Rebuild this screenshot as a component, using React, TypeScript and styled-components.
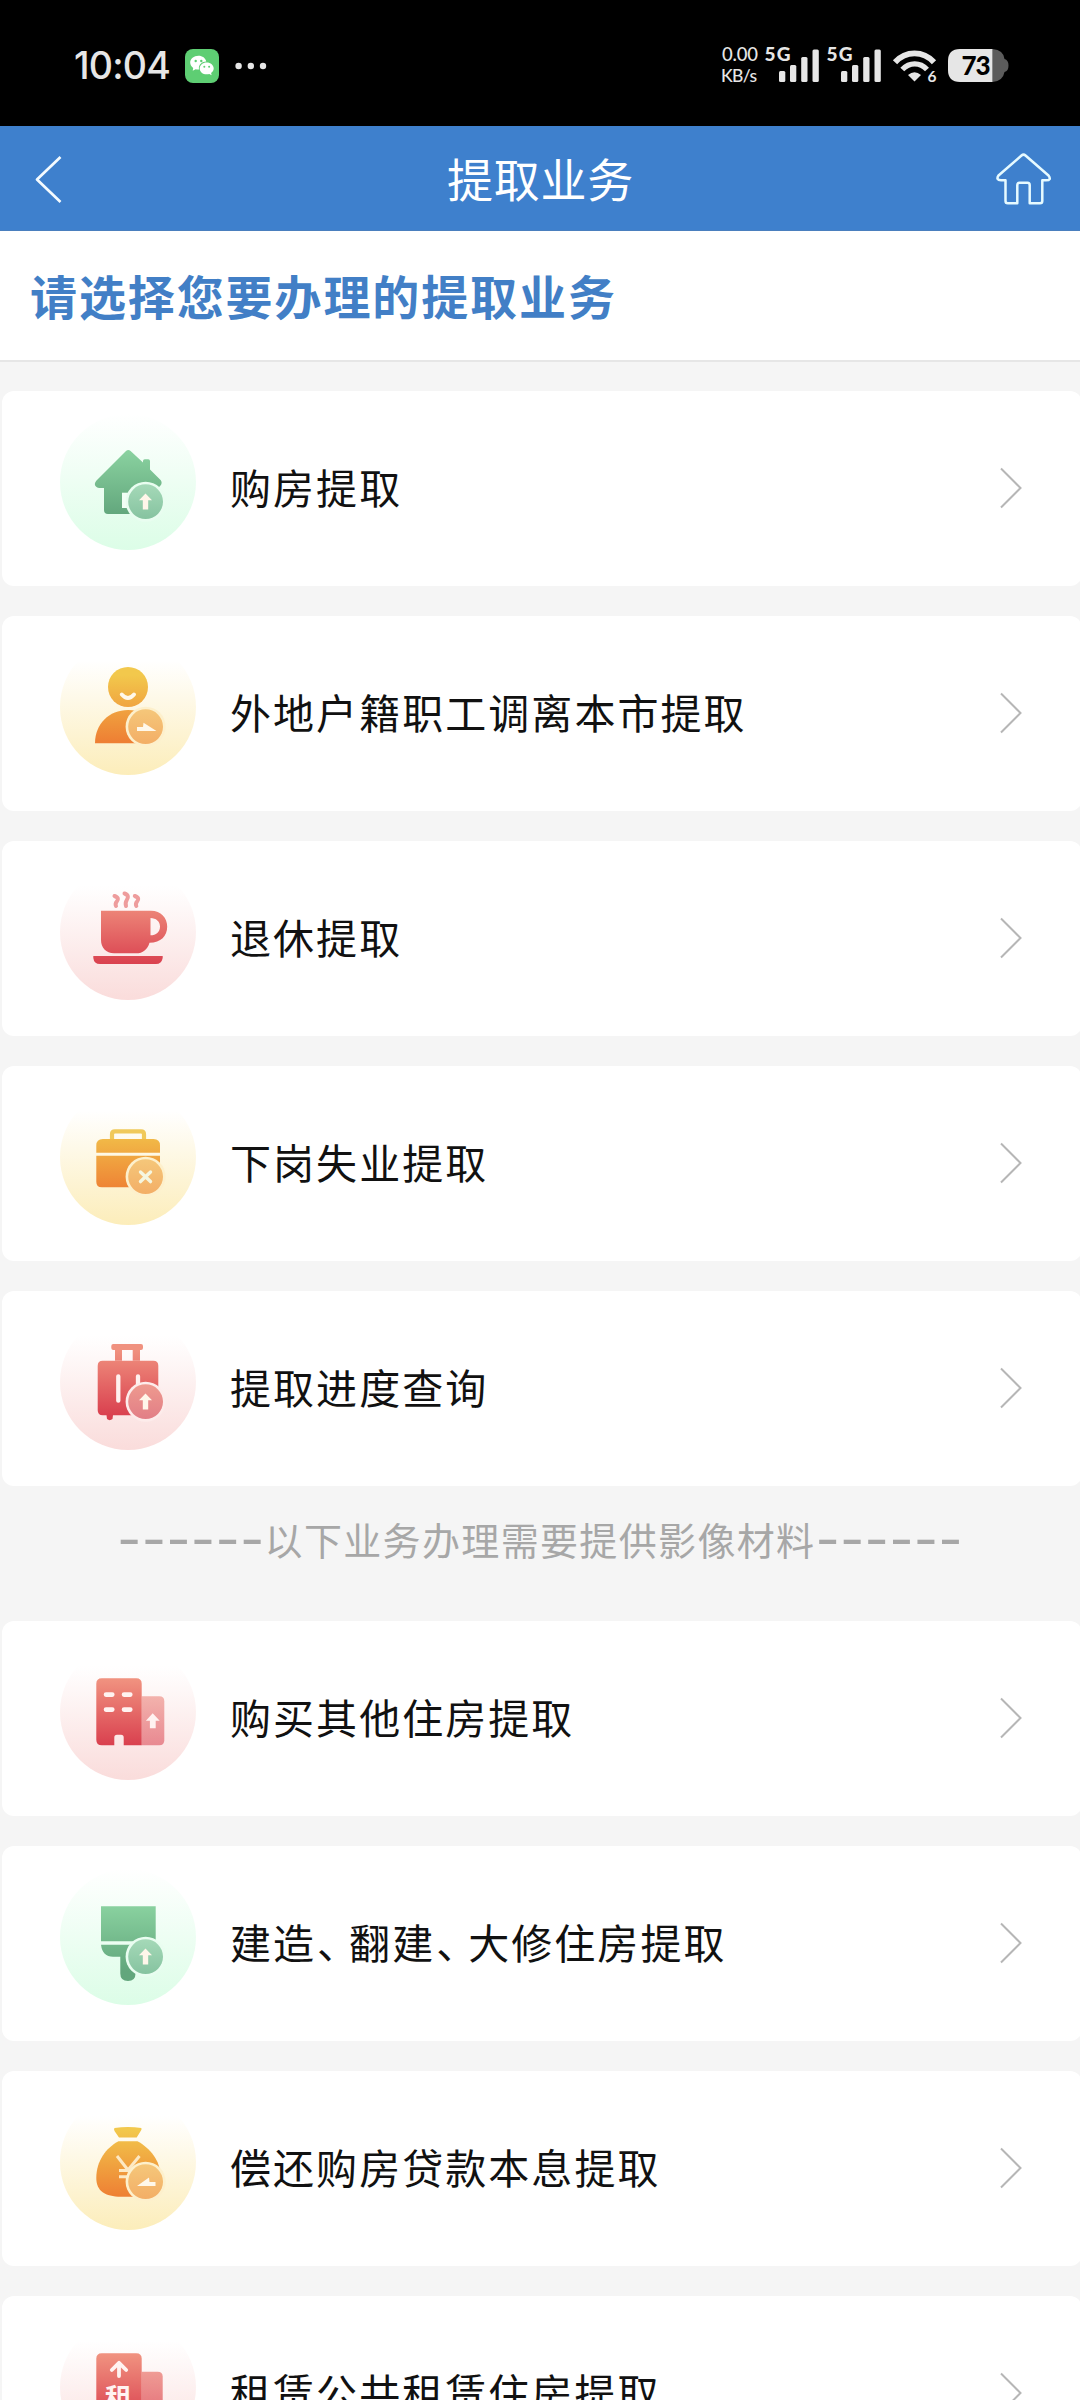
import React from "react";
import styled, { createGlobalStyle } from "styled-components";

const GlobalStyle = createGlobalStyle`
  * { box-sizing: border-box; }
  html, body { margin: 0; padding: 0; background: #f5f5f5; }
  body { font-family: "Noto Sans CJK SC", "Noto Sans", sans-serif; }
`;

const Screen = styled.div`
  width: 1080px;
  height: 2400px;
  overflow: hidden;
  background: #f5f5f5;
  display: flex;
  flex-direction: column;
`;

const StatusBar = styled.div`
  flex: none;
  height: 126px;
  background: #000;
  color: #e6e6e6;
  display: flex;
  align-items: center;
  justify-content: space-between;
  padding: 6px 70px 0 74px;
`;

const StatusGroup = styled.div`
  display: flex;
  align-items: center;
`;

const Clock = styled.span`
  font: 500 37.5px/40px "Inter", "Noto Sans", sans-serif;
  width: 111px;
  letter-spacing: -0.8px;
  white-space: nowrap;
`;

const NavBar = styled.header`
  flex: none;
  height: 105px;
  background: #3e80cd;
  border-bottom: 1px solid #4a7fbe;
  display: flex;
  align-items: center;
  justify-content: space-between;
  padding: 0 28px 0 34px;
`;

const NavSide = styled.button`
  width: 56px;
  height: 56px;
  padding: 2px 0 0;
  border: 0;
  background: none;
  display: flex;
  align-items: center;
`;

const NavTitle = styled.h1`
  margin: 0 5px 3px 0;
  color: #fff;
  font-size: 46px;
  font-weight: 400;
  line-height: 60px;
  letter-spacing: 0.8px;
`;

const Prompt = styled.h2`
  flex: none;
  margin: 0;
  height: 131px;
  padding: 0 30px;
  background: #fff;
  border-bottom: 2px solid #e6e6e6;
  color: #427fc6;
  font-size: 47px;
  font-weight: 700;
  line-height: 127px;
  letter-spacing: 1.9px;
`;

const List = styled.main`
  display: flex;
  flex-direction: column;
  gap: 30px;
  padding: 29px 0 0 2px;
`;

const Card = styled.div`
  flex: none;
  width: 1080px;
  height: 195px;
  border-radius: 12px;
  background: #fff;
  display: flex;
  align-items: center;
  padding: 0 60px 0 58px;
`;

const CardIcon = styled.svg`
  flex: none;
  width: 136px;
  height: 136px;
  margin: -13px 34px 0 0;
`;

const CardLabel = styled.span`
  flex: 1;
  padding-bottom: 5px;
  color: #111;
  font-size: 41px;
  line-height: 60px;
  letter-spacing: 2.05px;
  white-space: nowrap;
`;

const Pause = styled.span`
  margin-left: 1px;
  letter-spacing: -9px;
`;

const Note = styled.div`
  flex: none;
  height: 75px;
  padding: 0 2px 29px 0;
  color: #a7a7a7;
  font-size: 38px;
  line-height: 46px;
  letter-spacing: 1.35px;
  display: flex;
  align-items: center;
  justify-content: center;
  white-space: nowrap;
`;

const Dashes = styled.span`
  font-family: "Inter", sans-serif;
  font-size: 53px;
  letter-spacing: 0.2px;
`;

type Tone = "green" | "gold" | "red";

const tones: Record<Tone, { top: string; bottom: string; halo: string; ring: string; badgeTop: string; badgeBottom: string }> = {
  green: { top: "#8ad2a0", bottom: "#62a67c", halo: "#dcfde7", ring: "#e9fdf0", badgeTop: "#a5d9b8", badgeBottom: "#86c3a0" },
  gold: { top: "#f2c84c", bottom: "#ee8034", halo: "#fcedba", ring: "#fdf0cc", badgeTop: "#f5c77a", badgeBottom: "#f3ae66" },
  red: { top: "#f0917f", bottom: "#d93f4e", halo: "#fadcdb", ring: "#fdeceb", badgeTop: "#ee9a8f", badgeBottom: "#e27e86" },
};

const BadgeUp = () => <path d="M85.500 79.500l6.500 6.800h-3.800v9.200h-5.400v-9.200H79z" fill="#fff6ea" />;
const BadgeRight = () => <path d="M77 88h6l.5-4.200L96.500 92H77z" fill="#fff8ea" />;
const BadgeLeft = () => <path d="M95.500 88h-6l-.5-4.400L77 92h18.500z" fill="#fff8ea" />;
const BadgeCross = () => <path d="M80.500 83l10 9.600M90.500 83l-10 9.600" stroke="#f5f6e0" strokeWidth="3.400" strokeLinecap="round" />;

interface DrawingProps {
  id: string;
  tone: Tone;
  badge?: React.ReactNode;
  children: React.ReactNode;
}

const Drawing = ({ id, tone, badge, children }: DrawingProps) => {
  const t = tones[tone];
  return (
    <CardIcon viewBox="0 0 136 136" fill="none">
      <defs>
        <linearGradient id={`${id}-halo`} x1="0" y1="0" x2="0" y2="136" gradientUnits="userSpaceOnUse">
          <stop offset={tone === "green" ? 0 : 0.16} stopColor="#fff" />
          <stop offset="1" stopColor={t.halo} />
        </linearGradient>
        <linearGradient id={`${id}-ink`} x1="0" y1="36" x2="0" y2="102" gradientUnits="userSpaceOnUse">
          <stop offset="0" stopColor={t.top} />
          <stop offset="1" stopColor={t.bottom} />
        </linearGradient>
        <linearGradient id={`${id}-badge`} x1="0" y1="70" x2="0" y2="105" gradientUnits="userSpaceOnUse">
          <stop offset="0" stopColor={t.badgeTop} />
          <stop offset="1" stopColor={t.badgeBottom} />
        </linearGradient>
      </defs>
      <circle cx="68" cy="68" r="68" fill={`url(#${id}-halo)`} />
      <g fill={`url(#${id}-ink)`}>{children}</g>
      {badge && (
        <>
          <circle cx="85.600" cy="87.700" r="20" fill={t.ring} />
          <circle cx="85.600" cy="87.700" r="17.400" fill={`url(#${id}-badge)`} />
          {badge}
        </>
      )}
    </CardIcon>
  );
};

const HouseIcon = () => (
  <Drawing id="house" tone="green" badge={<BadgeUp />}>
    <path d="M66 37Q68.300 35 70.600 37L83 48.500V47Q83 45.300 84.800 45.300H88.200Q90 45.300 90 47V55.500L100.800 66.200Q102.600 69 100.500 71.500Q99.500 74 93 74V100H48Q44 100 44 96V74H39Q35 73 34.800 70Q35 68 36.500 66.500Z" />
    <path d="M62 78.700h8V94h-8z" fill="#f1fff5" />
  </Drawing>
);

const PersonIcon = () => (
  <Drawing id="person" tone="gold" badge={<BadgeRight />}>
    <circle cx="68" cy="48" r="20" />
    <path d="M61.800 55.500Q68 62.500 74 55.500" stroke="#fff8ea" strokeWidth="4" strokeLinecap="round" fill="none" />
    <path d="M35 104.300C35 85 49 71 68 71C80 71 88 76 92 84V104.300Z" />
  </Drawing>
);

const CupIcon = () => (
  <Drawing id="cup" tone="red">
    <path fillRule="evenodd" d="M41 46.700H91C101 46.700 107.200 54 107.200 62.500C107.200 72 101 78.700 89.500 78.700C87.500 85.500 83 89.300 76 89.300H54C46 89.300 41 83.500 41 76ZM90.500 54V71.300C96 71.300 100 68 100 62.500C100 57.500 96 54 90.500 54Z" />
    <path d="M33.300 92H102.700V94Q101.500 100 96 100H40Q34 100 33.300 94Z" />
    <path d="M54.500 32c4.200 1.500 4 3.500 2.300 5.500s-1.500 3-.8 4.500M64.500 29.500c4.200 1.500 4 4 2.300 6.500s-1.500 3.500-.8 6M74.800 32c4.200 1.500 4 3.500 2.300 5.500s-1.500 3-.8 4.500" stroke="#ee9c9c" strokeWidth="4" strokeLinecap="round" fill="none" />
  </Drawing>
);

const BriefcaseIcon = () => (
  <Drawing id="briefcase" tone="gold" badge={<BadgeCross />}>
    <path d="M52 51V45.300Q52 42.300 55 42.300H81Q84 42.300 84 45.300V51" stroke="#f0c95a" strokeWidth="4.200" fill="none" />
    <path d="M36.300 63.700V56.500Q36.300 50 42.800 50H93.500Q100 50 100 56.500V63.700ZM36.300 66.700H100V98.300H41.800Q36.300 98.300 36.300 92.800Z" />
  </Drawing>
);

const SuitcaseIcon = () => (
  <Drawing id="suitcase" tone="red" badge={<BadgeUp />}>
    <path fillRule="evenodd" d="M53.300 30H81Q83 30 83 32V34Q83 36 81 36H80V46.700H55V36H53.300Q51.300 36 51.300 34V32Q51.300 30 53.300 30ZM62 36V46.700H72.700V36Z" />
    <path d="M42.700 46.700H93.300Q98.300 46.700 98.300 51.700V101.300H53L52.500 105Q49.700 107.300 47 105L46.500 101.300H42.700Q37.700 101.300 37.700 96.300V51.700Q37.700 46.700 42.700 46.700Z" />
    <path d="M58.300 62.300V86.700M78 62.300V75" stroke="#fff1ef" strokeWidth="4.300" strokeLinecap="round" />
  </Drawing>
);

const BuildingIcon = () => (
  <Drawing id="building" tone="red">
    <path d="M81.700 52.300H99.300Q104.300 52.300 104.300 57.300V96.300Q104.300 101.300 99.300 101.300H81.700Z" opacity="0.560" />
    <path d="M41.800 34.300H76.200Q81.700 34.300 81.700 39.800V101.300H63.700V93.500Q63.700 90.700 61 90.700H57Q54.300 90.700 54.300 93.500V101.300H41.800Q36.300 101.300 36.300 95.800V39.800Q36.300 34.300 41.800 34.300Z" />
    <path d="M46 50.600h6.300M64 50.600h6.300M46 65.600h6.300M64 65.600h6.300" stroke="#fff3f1" strokeWidth="4.600" strokeLinecap="round" />
    <path d="M92.700 69.300l7 7.500h-4v7.500h-5.800v-7.500h-4z" fill="#fff3f1" />
  </Drawing>
);

const BrushIcon = () => (
  <Drawing id="brush" tone="green" badge={<BadgeUp />}>
    <path d="M41 37.300H95.700V72.300H41Z" />
    <path d="M41 75.700H95.700V87.700H75.500V104.500Q75.500 112 68 112Q60.300 112 60.300 104.500V87.700H53Q42.500 87.700 41 75.700Z" />
  </Drawing>
);

const MoneyBagIcon = () => (
  <Drawing id="bag" tone="gold" badge={<BadgeLeft />}>
    <path d="M54.500 34Q68 32 81.300 34Q82 35 81 36.500L76.700 43.500H59L54.500 37Q53.500 35 54.500 34Z" />
    <path d="M58.500 47.300H77.500C90 54 100.500 67 100.500 82C100.500 97 90 102.700 76 102.700H61C45 102.700 36.300 97 36.300 84C36.300 67 46 54 58.500 47.300Z" />
    <path d="M57 62L68 76L79.500 62M59 76.500H77M59 82.800H72" stroke="#fde9c4" strokeWidth="3" fill="none" />
  </Drawing>
);

const RentIcon = () => (
  <Drawing id="rent" tone="red">
    <path d="M81.700 52.700H97.700Q102.700 52.700 102.700 57.700V101.300H81.700Z" opacity="0.740" />
    <path d="M41.800 34.300H76.200Q81.700 34.300 81.700 39.800V101.300H41.800Q36.300 101.300 36.300 95.800V39.800Q36.300 34.300 41.800 34.300Z" />
    <path d="M51.800 51L59 43.800L66.200 51M59 45V57" stroke="#fff3f1" strokeWidth="3.800" strokeLinecap="round" strokeLinejoin="round" fill="none" />
    <text x="58.500" y="88.500" textAnchor="middle" fontSize="27" fontWeight="700" fill="#fff3f1">租</text>
  </Drawing>
);

const ChevronMark = styled.svg`
  flex: none;
  margin-bottom: 2px;
`;

const Chevron = () => (
  <ChevronMark width="22" height="42" viewBox="0 0 22 42" fill="none">
    <path d="M1 1.500L20.500 21L1 40.500" stroke="#b6b6b6" strokeWidth="2" />
  </ChevronMark>
);

const WeChatIcon = () => (
  <svg width="34" height="34" viewBox="0 0 34 34">
    <rect width="34" height="34" rx="8" fill="#5ece73" />
    <path d="M13.500 6.700c-4.700 0-8.300 3-8.300 6.900 0 2.200 1.100 4 3 5.300l-.5 2.800 3-1.500c1 .3 2 .4 3.300.3-.8-4.800 3-8 7.300-8-.8-3.400-3.900-5.800-7.800-5.800z" fill="#fff" />
    <path d="M21.700 13.500c-4 0-7 2.700-7 5.900s3 5.900 7 5.900c.9 0 1.800-.1 2.600-.4l2.300 1.300-.5-2.300c1.600-1.100 2.600-2.700 2.600-4.500 0-3.200-3-5.900-7-5.900z" fill="#fff" />
    <g fill="#5ece73"><circle cx="10.700" cy="12" r="1.200" /><circle cx="16.300" cy="12" r="1.200" /><circle cx="19.300" cy="17.800" r="1" /><circle cx="24.100" cy="17.800" r="1" /></g>
  </svg>
);

const MoreDots = styled.svg`
  margin-left: 15px;
`;

const StatusIcons = () => (
  <svg width="290" height="60" viewBox="720 36 290 60" fill="#e6e6e6" fontFamily="Lato, sans-serif">
    <text x="722" y="60.500" fontSize="18.500" fontWeight="500" textLength="36">0.00</text>
    <text x="721" y="82" fontSize="17.500" fontWeight="500" textLength="36">KB/s</text>
    {[0, 62].map((dx) => (
      <g key={dx} transform={`translate(${dx} 0)`}>
        <text x="764.500" y="61" fontSize="19" fontWeight="900" textLength="26">5G</text>
        <rect x="779" y="71" width="6.300" height="11" rx="1.500" />
        <rect x="790" y="65" width="6.300" height="17" rx="1.500" />
        <rect x="801.200" y="57" width="6.300" height="25" rx="1.500" />
        <rect x="812.500" y="49.500" width="6.300" height="32.500" rx="1.500" />
      </g>
    ))}
    <g fill="none" stroke="#e6e6e6">
      <path d="M895 62.300C906 50.500 923 50.500 934 62.300" strokeWidth="5.800" />
      <path d="M902.300 69.500C909.500 62 920 62 927 69.500" strokeWidth="5.400" />
    </g>
    <path d="M908 75Q914.500 69.500 921 75L914.500 81.500Z" />
    <text x="927.500" y="82" fontSize="15.500" fontWeight="700">6</text>
    <path d="M960 49H992.700V82H960Q948 82 948 70V61Q948 49 960 49Z" />
    <path d="M992.700 49Q1003.500 50 1004.500 59Q1008.500 60 1008.500 65.500Q1008.500 71 1004.500 72Q1003 81 992.700 82Z" fill="#5c5c5c" />
    <text x="961.500" y="75" fontSize="26" fontWeight="900" fill="#000" textLength="29">73</text>
  </svg>
);

const BackIcon = () => (
  <svg width="30" height="50" viewBox="34 154 30 50" fill="none">
    <path d="M60.500 157L37 179.500L60.500 202" stroke="#f4fbff" strokeWidth="2.700" strokeLinejoin="round" />
  </svg>
);

const HomeIcon = () => (
  <svg width="56" height="52" viewBox="996 154 56 52" fill="none">
    <path d="M1021.500 156.500Q1023.500 154.700 1025.500 156.500L1048.500 176.500Q1052 181.300 1046 181.300H1042.300V202Q1042.300 204.300 1040 204.300H1029.700V186Q1029.700 183.700 1027.500 183.700H1019.500Q1017.300 183.700 1017.300 186V204.300H1007.800Q1005.500 204.300 1005.500 202V181.300H1001Q995.500 181 998.500 176.500Z" stroke="#e6faff" strokeWidth="2.500" strokeLinejoin="round" />
  </svg>
);

interface Service {
  icon: React.ComponentType;
  label: React.ReactNode;
}

const direct: Service[] = [
  { icon: HouseIcon, label: "购房提取" },
  { icon: PersonIcon, label: "外地户籍职工调离本市提取" },
  { icon: CupIcon, label: "退休提取" },
  { icon: BriefcaseIcon, label: "下岗失业提取" },
  { icon: SuitcaseIcon, label: "提取进度查询" },
];

const withDocuments: Service[] = [
  { icon: BuildingIcon, label: "购买其他住房提取" },
  { icon: BrushIcon, label: <>建造<Pause>、</Pause>翻建<Pause>、</Pause>大修住房提取</> },
  { icon: MoneyBagIcon, label: "偿还购房贷款本息提取" },
  { icon: RentIcon, label: "租赁公共租赁住房提取" },
];

const ServiceCard = ({ icon: Icon, label }: Service) => (
  <Card>
    <Icon />
    <CardLabel>{label}</CardLabel>
    <Chevron />
  </Card>
);

export default function App() {
  return (
    <Screen>
      <GlobalStyle />
      <StatusBar>
        <StatusGroup>
          <Clock>10:04</Clock>
          <WeChatIcon />
          <MoreDots width="34" height="8" viewBox="0 0 34 8" fill="#e6e6e6">
            <circle cx="4.600" cy="4" r="3.200" />
            <circle cx="16.800" cy="4" r="3.200" />
            <circle cx="29" cy="4" r="3.200" />
          </MoreDots>
        </StatusGroup>
        <StatusIcons />
      </StatusBar>
      <NavBar>
        <NavSide aria-label="返回"><BackIcon /></NavSide>
        <NavTitle>提取业务</NavTitle>
        <NavSide aria-label="首页"><HomeIcon /></NavSide>
      </NavBar>
      <Prompt>请选择您要办理的提取业务</Prompt>
      <List>
        {direct.map((s, i) => <ServiceCard key={i} {...s} />)}
        <Note>
          <Dashes>------</Dashes>
          <span>以下业务办理需要提供影像材料</span>
          <Dashes>------</Dashes>
        </Note>
        {withDocuments.map((s, i) => <ServiceCard key={i} {...s} />)}
      </List>
    </Screen>
  );
}
